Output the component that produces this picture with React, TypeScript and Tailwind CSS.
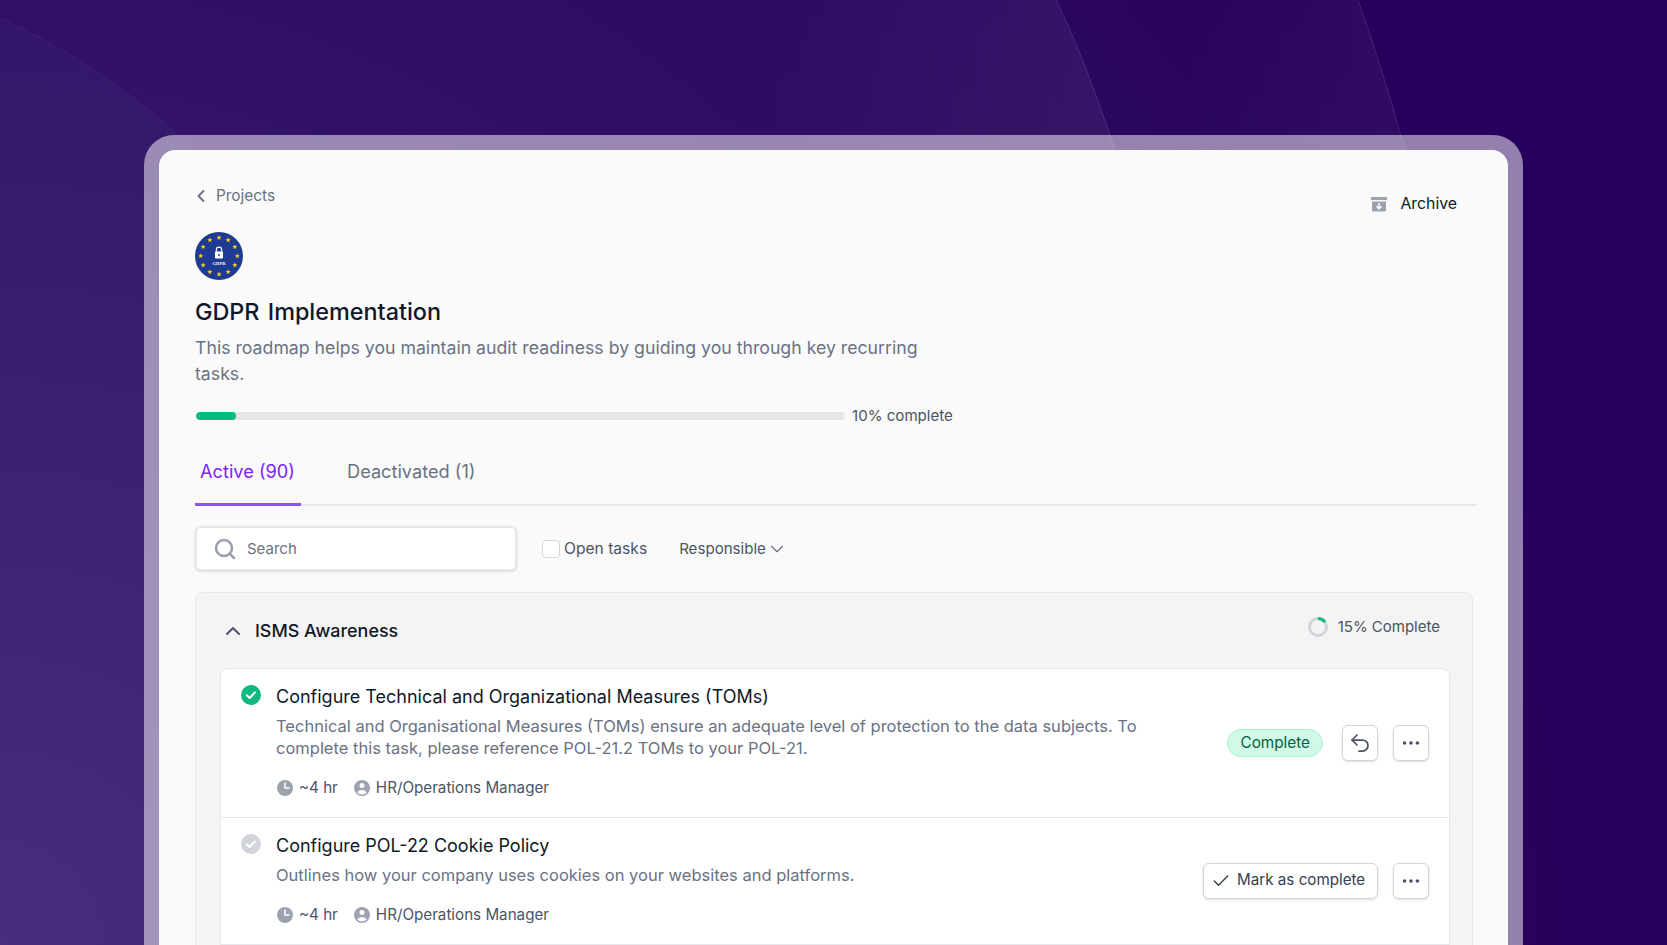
import { Check, ChevronDown, ChevronLeft, ChevronUp, MoreHorizontal, Search, Undo2 } from 'lucide-react';

const STAR_POINTS = Array.from({ length: 12 }, (_, i) => {
  const a = (i * Math.PI) / 6;
  return { x: 24 + 18.3 * Math.sin(a), y: 24 - 18.3 * Math.cos(a) };
});

function GdprLogo() {
  return (
    <svg viewBox="0 0 48 48" className="h-12 w-12">
      <circle cx="24" cy="24" r="24" fill="#1f3a93" />
      {STAR_POINTS.map((p, i) => (
        <polygon
          key={i}
          transform={`translate(${p.x} ${p.y}) scale(2.7)`}
          points="0,-1 0.29,-0.31 0.95,-0.31 0.42,0.12 0.59,0.81 0,0.4 -0.59,0.81 -0.42,0.12 -0.95,-0.31 -0.29,-0.31"
          fill="#fcd116"
        />
      ))}
      <path d="M21.3 20v-2.2a2.7 2.7 0 015.4 0V20" fill="none" stroke="#fff" strokeWidth="1.1" />
      <rect x="20" y="19.6" width="8" height="7" rx="0.8" fill="#fff" />
      <circle cx="24" cy="23" r="1" fill="#1f3a93" />
      <text x="24" y="33" textAnchor="middle" fill="#fff" fontSize="4.6" fontWeight="700" fontFamily="'Liberation Serif', serif">
        GDPR
      </text>
    </svg>
  );
}

function ArchiveIcon() {
  return (
    <svg viewBox="0 0 16 16" className="h-4 w-4">
      <rect x="0" y="1" width="16" height="3" rx="0.5" fill="#9ca3af" />
      <path d="M1 5.5h14v8.5a1.5 1.5 0 01-1.5 1.5h-11A1.5 1.5 0 011 14z" fill="#9ca3af" />
      <path d="M8 7v5.5M5.5 10.2L8 12.7l2.5-2.5" fill="none" stroke="#fff" strokeWidth="1.5" />
    </svg>
  );
}

function CheckCircle({ done }: { done: boolean }) {
  return (
    <svg viewBox="0 0 20 20" className="h-5 w-5 shrink-0">
      <circle cx="10" cy="10" r="10" fill={done ? '#10b981' : '#d1d5db'} />
      <path d="M5.8 10.3l2.8 2.7 5.4-5.6" fill="none" stroke="#fff" strokeWidth="2" strokeLinecap="round" strokeLinejoin="round" />
    </svg>
  );
}

function ClockIcon() {
  return (
    <svg viewBox="2 2 16 16" className="h-4 w-4 shrink-0" fill="#9ca3af">
      <path
        fillRule="evenodd"
        clipRule="evenodd"
        d="M10 18a8 8 0 100-16 8 8 0 000 16zm.75-13a.75.75 0 00-1.5 0v5c0 .414.336.75.75.75h4a.75.75 0 000-1.5h-3.25V5z"
      />
    </svg>
  );
}

function UserIcon() {
  return (
    <svg viewBox="2 2 16 16" className="h-4 w-4 shrink-0" fill="#9ca3af">
      <path
        fillRule="evenodd"
        clipRule="evenodd"
        d="M18 10a8 8 0 11-16 0 8 8 0 0116 0zm-5.5-2.5a2.5 2.5 0 11-5 0 2.5 2.5 0 015 0zM10 12a5.99 5.99 0 00-4.793 2.39A6.483 6.483 0 0010 16.5a6.483 6.483 0 004.793-2.11A5.99 5.99 0 0010 12z"
      />
    </svg>
  );
}

function ProgressRing() {
  return (
    <svg viewBox="0 0 20 20" className="h-5 w-5 shrink-0">
      <circle cx="10" cy="10" r="8.5" fill="none" stroke="#d1d5db" strokeWidth="3" />
      <circle
        cx="10"
        cy="10"
        r="8.5"
        fill="none"
        stroke="#10b981"
        strokeWidth="3"
        strokeDasharray="8 46"
        transform="rotate(-90 10 10)"
      />
    </svg>
  );
}

function IconButton({ children }: { children: React.ReactNode }) {
  return (
    <button
      type="button"
      className="flex h-9 w-9 items-center justify-center rounded-md border border-gray-300 bg-white text-gray-600 shadow-sm"
    >
      {children}
    </button>
  );
}

function TaskMeta() {
  return (
    <div className="mt-[17px] flex items-center text-[15.2px] leading-6 text-gray-600">
      <span className="ml-px">
        <ClockIcon />
      </span>
      <span className="ml-[6px]">~4 hr</span>
      <span className="ml-4">
        <UserIcon />
      </span>
      <span className="ml-[6px]">HR/Operations Manager</span>
    </div>
  );
}

type TaskRowProps = {
  title: string;
  lines: string;
  done: boolean;
  actions: React.ReactNode;
};

function TaskRow({ title, lines, done, actions }: TaskRowProps) {
  return (
    <div className="flex items-center border-b border-gray-200 pl-[20px] pr-[20px] pt-4 pb-[17px]">
      <div className="flex min-w-0 flex-1 gap-[15px]">
        <CheckCircle done={done} />
        <div className="w-[880px]">
          <div className="text-[18px] leading-6 text-gray-900">{title}</div>
          <p className="mt-[6px] text-[16.5px] leading-[22px] text-gray-500">{lines}</p>
          <TaskMeta />
        </div>
      </div>
      <div className="flex items-center">{actions}</div>
    </div>
  );
}

export default function App() {
  return (
    <div className="relative h-[945px] overflow-hidden bg-[radial-gradient(circle_1900px_at_0%_100%,#452779_0%,#2f1066_50%,#2b0860_72%,#26005c_85%)] px-[144px] pt-[135px] [font-family:Inter,sans-serif]">
      {/* background arcs */}
      <svg viewBox="0 0 1667 945" className="absolute inset-0 h-full w-full">
        <defs>
          <linearGradient id="bandA" x1="760" y1="0" x2="1100" y2="0" gradientUnits="userSpaceOnUse">
            <stop offset="0" stopColor="#fff" stopOpacity="0" />
            <stop offset="1" stopColor="#fff" stopOpacity="0.055" />
          </linearGradient>
          <linearGradient id="bandB" x1="1180" y1="0" x2="1390" y2="0" gradientUnits="userSpaceOnUse">
            <stop offset="0" stopColor="#fff" stopOpacity="0" />
            <stop offset="1" stopColor="#fff" stopOpacity="0.045" />
          </linearGradient>
        </defs>
        <path d="M0 18C70 50 130 90 195 150L260 240V945H0Z" fill="#fff" fillOpacity="0.025" />
        <path d="M0 18C70 50 130 90 195 150" fill="none" stroke="#fff" strokeOpacity="0.05" />
        <path d="M760 0H1056C1080 48 1098 100 1115 150V240H760Z" fill="url(#bandA)" />
        <path d="M1056 0C1080 48 1098 100 1115 150" fill="none" stroke="#fff" strokeOpacity="0.12" />
        <path d="M1180 0H1358C1376 50 1391 100 1405 150V240H1180Z" fill="url(#bandB)" />
        <path d="M1358 0C1376 50 1391 100 1405 150" fill="none" stroke="#fff" strokeOpacity="0.12" />
      </svg>

      <div className="relative h-[810px] rounded-t-[30px] bg-white/50 px-[15px] pt-[15px]">
        <div className="h-[795px] rounded-t-[16px] bg-[#fafafa] pl-[36px] pr-[32px] pt-[34px]">
          {/* header */}
          <div className="flex items-start justify-between">
            <a className="flex items-center text-[15.4px] leading-6 text-gray-500">
              <ChevronLeft className="ml-[-4px] h-5 w-5 text-gray-500" strokeWidth={2.25} />
              <span className="ml-[5px]">Projects</span>
            </a>
            <button type="button" className="mr-[19px] mt-[8px] flex items-center text-[15.8px] leading-6 text-gray-900">
              <ArchiveIcon />
              <span className="ml-[13px]">Archive</span>
            </button>
          </div>

          <div className="mt-[16px]">
            <GdprLogo />
          </div>
          <h1 className="mt-4 text-[23.4px] font-medium leading-8 text-gray-900 [word-spacing:2px]">GDPR Implementation</h1>
          <p className="mt-[7px] w-[750px] text-[17.7px] leading-[25.5px] text-gray-500">
            This roadmap helps you maintain audit readiness by guiding you through key recurring tasks.
          </p>

          <div className="mt-[18px] flex items-center">
            <div className="ml-px h-2 w-[649px] overflow-hidden rounded-full bg-gray-200">
              <div className="h-full w-[40px] rounded-full bg-emerald-500" />
            </div>
            <span className="ml-[7px] text-[15.1px] leading-6 text-gray-600">10% complete</span>
          </div>

          {/* tabs */}
          <div className="mt-[29px] flex border-b-2 border-gray-200">
            <div className="-mb-[2px] w-[106px] border-b-[3px] border-violet-500 pb-[18px] pl-[5px] text-[18.2px] leading-7 text-violet-600">
              Active (90)
            </div>
            <div className="ml-[46px] text-[18.2px] leading-7 text-gray-500">Deactivated (1)</div>
          </div>

          {/* filters */}
          <div className="mt-[20px] flex items-center">
            <div className="flex h-[45px] w-[322px] items-center rounded-md border-2 border-gray-200 bg-white pl-[16px] shadow-sm">
              <Search className="h-6 w-6 text-gray-400" strokeWidth={2.5} />
              <span className="ml-[10px] text-[15px] leading-6 text-gray-500">Search</span>
            </div>
            <span className="ml-[25px] h-[18px] w-[18px] rounded border border-gray-300 bg-white" />
            <span className="ml-[4px] text-[15.6px] leading-6 text-gray-600">Open tasks</span>
            <span className="ml-[32px] text-[15.1px] leading-6 text-gray-600">Responsible</span>
            <ChevronDown className="ml-0 h-[22px] w-[22px] text-gray-500" strokeWidth={1.25} />
          </div>

          {/* section */}
          <div className="mr-[3px] mt-[21px] rounded-t-lg border border-gray-200 bg-[#f4f4f5] pl-[24px] pr-[22px] pt-[16px]">
            <div className="flex h-[59px] items-start justify-between pr-[10px]">
              <div className="mt-[8px] flex items-center">
                <ChevronUp className="ml-[1px] h-6 w-6 text-gray-600" strokeWidth={2} />
                <h2 className="ml-[10px] text-[17.9px] font-medium leading-7 text-gray-900">ISMS Awareness</h2>
              </div>
              <div className="mt-[6px] flex items-center">
                <ProgressRing />
                <span className="ml-[10px] text-[15px] leading-6 text-gray-600">15% Complete</span>
              </div>
            </div>
            <div className="rounded-t-lg border border-gray-200 bg-white">
              <TaskRow
                title="Configure Technical and Organizational Measures (TOMs)"
                lines="Technical and Organisational Measures (TOMs) ensure an adequate level of protection to the data subjects. To complete this task, please reference POL-21.2 TOMs to your POL-21."
                done
                actions={
                  <>
                    <span className="mr-[19px] rounded-full border border-emerald-200 bg-emerald-100 px-[12px] py-[1px] text-[15.3px] leading-6 text-emerald-800">
                      Complete
                    </span>
                    <IconButton>
                      <Undo2 className="h-6 w-6" strokeWidth={1.75} />
                    </IconButton>
                    <span className="ml-[15px]">
                      <IconButton>
                        <MoreHorizontal className="h-[22px] w-[22px]" />
                      </IconButton>
                    </span>
                  </>
                }
              />
              <TaskRow
                title="Configure POL-22 Cookie Policy"
                lines="Outlines how your company uses cookies on your websites and platforms."
                done={false}
                actions={
                  <>
                    <button
                      type="button"
                      className="flex h-9 w-[175px] items-center gap-[6px] rounded-md border border-gray-300 bg-white pl-[7px] text-[15.2px] text-gray-700 shadow-sm"
                    >
                      <Check className="h-5 w-5" strokeWidth={1.75} />
                      Mark as complete
                    </button>
                    <span className="ml-[15px]">
                      <IconButton>
                        <MoreHorizontal className="h-[22px] w-[22px]" />
                      </IconButton>
                    </span>
                  </>
                }
              />
            </div>
          </div>
        </div>
      </div>
    </div>
  );
}
